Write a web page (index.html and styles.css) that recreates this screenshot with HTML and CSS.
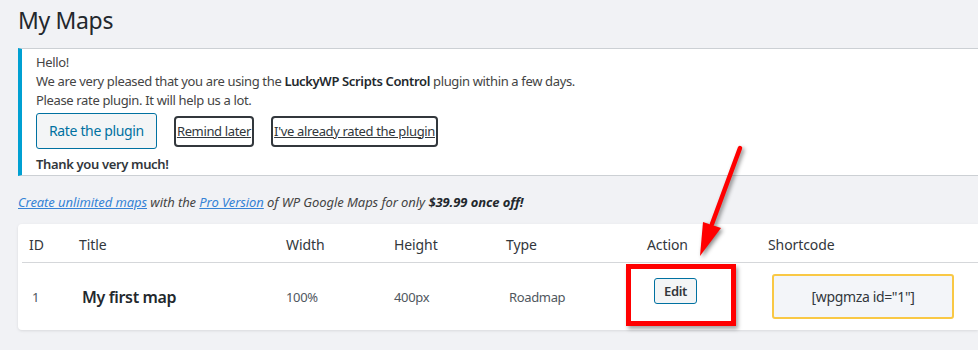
FILE: index.html
```html
<!DOCTYPE html>
<html>
<head>
    <title>My Maps</title>
    <link rel="stylesheet" href="styles.css">
</head>
<body>
    <div class="wrap">
        <h1>My Maps</h1>

        <div class="notice">
            <p>Hello!<br>
            We are very pleased that you are using the <strong>LuckyWP Scripts Control</strong> plugin within a few days.<br>
            Please rate plugin. It will help us a lot.</p>
            <div class="notice-actions">
                <a href="#" class="button">Rate the plugin</a>
                <a href="#" class="link-button">Remind later</a>
                <a href="#" class="link-button">I've already rated the plugin</a>
            </div>
            <p class="thanks">Thank you very much!</p>
        </div>

        <p class="promo">
            <a href="#">Create unlimited maps</a> with the <a href="#">Pro Version</a> of WP Google Maps for only <strong>$39.99 once off!</strong>
        </p>

        <div class="maps-card">
            <div class="maps-table">
                <div class="th">ID</div>
                <div class="th">Title</div>
                <div class="th">Width</div>
                <div class="th">Height</div>
                <div class="th">Type</div>
                <div class="th">Action</div>
                <div class="th">Shortcode</div>

                <div class="td td-id">1</div>
                <div class="td td-title">My first map</div>
                <div class="td">100%</div>
                <div class="td">400px</div>
                <div class="td td-type">Roadmap</div>
                <div class="td td-action">
                    <a href="#" class="button button-small">Edit</a>
                    <span class="highlight"></span>
                </div>
                <div class="td td-shortcode">
                    <div class="shortcode">[wpgmza id="1"]</div>
                </div>
            </div>
        </div>

        <!-- annotation arrow pointing at the Edit button -->
        <svg class="arrow" width="978" height="350" viewBox="0 0 978 350">
            <line x1="740" y1="148" x2="712" y2="224" stroke="#f00" stroke-width="4.5" stroke-linecap="round"/>
            <polygon points="700,256 703,222 721,228" fill="#f00"/>
        </svg>
    </div>
</body>
</html>
```

FILE: styles.css
```css
body {
    margin: 0;
    background-color: #f1f2f5;
    font-family: "Noto Sans", "Open Sans", sans-serif;
    font-size: 13px;
    letter-spacing: -0.35px;
    color: #444;
    overflow: hidden;
}
.wrap {
    position: relative;
    padding-left: 18px;
    height: 350px;
}
h1 {
    margin: 0;
    padding-top: 5px;
    font-size: 23px;
    font-weight: 400;
    line-height: 30px;
    color: #23282d;
}
.notice {
    margin-top: 13px;
    background-color: #fff;
    border-top: 1px solid #ccd0d4;
    border-bottom: 1px solid #ccd0d4;
    border-left: 4px solid #00a0d2;
    padding: 4px 14px 1px 14px;
}
.notice p {
    margin: 0;
    line-height: 19px;
}
.notice strong {
    font-weight: 600;
    color: #23282d;
}
.notice-actions {
    display: flex;
    align-items: center;
    gap: 17px;
    margin-top: 3px;
    height: 36px;
}
.button {
    display: inline-block;
    box-sizing: border-box;
    height: 36px;
    line-height: 34px;
    padding: 0 12px;
    border: 1px solid #0071a1;
    border-radius: 3px;
    background-color: #f3f5f6;
    color: #0071a1;
    text-decoration: none;
    font-size: 14px;
}
.link-button {
    display: inline-block;
    box-sizing: border-box;
    height: 31px;
    line-height: 27px;
    padding: 0 1px;
    border: 2px solid #32373c;
    border-radius: 4px;
    color: #32373c;
    font-size: 13px;
    white-space: nowrap;
}
.notice .thanks {
    margin-top: 6px;
    font-weight: 600;
    color: #32373c;
}
.promo {
    margin: 17px 0 0 0;
    line-height: 19px;
    font-style: italic;
    letter-spacing: -0.08px;
    color: #444;
}
.promo a {
    color: #3583d6;
}
.promo strong {
    color: #23282d;
}
.maps-card {
    margin-top: 12px;
    background-color: #fff;
    border-radius: 4px 0 0 4px;
    box-shadow: 0 1px 3px rgba(0,0,0,0.1);
    padding: 0 0 0 4px;
}
.maps-table {
    display: grid;
    grid-template-columns: 50px 207px 108px 112px 141px 121px 1fr;
}
.th {
    height: 38px;
    line-height: 42px;
    padding-left: 7px;
    font-size: 14px;
    letter-spacing: -0.1px;
    color: #32373c;
    border-bottom: 1px solid #d5d7da;
}
.td {
    height: 67px;
    display: flex;
    align-items: center;
    padding-left: 7px;
    color: #50575e;
}
.td-id {
    padding-left: 10px;
}
.td-title {
    padding-left: 10px;
    font-size: 16px;
    font-weight: 600;
    color: #23282d;
}
.td-type {
    padding-left: 10px;
}
.td-action {
    position: relative;
    padding-left: 14px;
    align-items: flex-start;
}
.button-small {
    margin-top: 15px;
    height: 26px;
    line-height: 24px;
    padding: 0 9px;
    font-size: 13px;
    font-weight: 600;
    color: #32373c;
}
.highlight {
    position: absolute;
    left: -14px;
    top: 1px;
    width: 110px;
    height: 62px;
    box-sizing: border-box;
    border: 5px solid #f00;
    box-shadow: 2px 3px 4px rgba(0,0,0,0.35);
}
.td-shortcode {
    padding-left: 11px;
}
.shortcode {
    box-sizing: border-box;
    width: 182px;
    height: 45px;
    line-height: 41px;
    text-align: center;
    border: 2px solid #f9c845;
    border-radius: 3px;
    background-color: #f3f5f9;
    color: #32373c;
    font-size: 14px;
}
.arrow {
    position: absolute;
    left: 0;
    top: 0;
    pointer-events: none;
    filter: drop-shadow(2px 2px 2px rgba(0,0,0,0.45));
}
```
